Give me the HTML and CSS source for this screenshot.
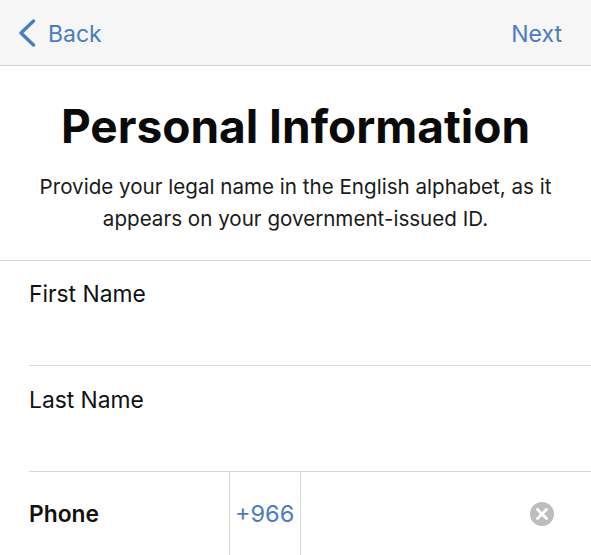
FILE: index.html
```html
<!DOCTYPE html>
<html lang="en">
<head>
    <meta charset="UTF-8">
    <meta name="viewport" content="width=device-width, initial-scale=1.0">
    <title>Personal Information</title>
    <link rel="stylesheet" href="styles.css">
</head>
<body>
    <header class="nav">
        <a class="nav-link back">
            <svg class="chevron" width="18" height="28" viewBox="0 0 18 28">
                <path d="M15.5 2 L3 14 L15.5 26" fill="none" stroke="#4a7dc0" stroke-width="3.4" stroke-linecap="round" stroke-linejoin="round"/>
            </svg>
            <span>Back</span>
        </a>
        <a class="nav-link">Next</a>
    </header>

    <section class="intro">
        <h1>Personal Information</h1>
        <p>Provide your legal name in the English alphabet, as it appears on your government-issued ID.</p>
    </section>

    <form class="fields">
        <div class="row">First Name</div>
        <div class="row row-tall">Last Name</div>
        <div class="row phone">
            <div class="phone-label">Phone</div>
            <div class="phone-code">+966</div>
            <div class="phone-input">
                <svg class="clear" width="24" height="24" viewBox="0 0 24 24">
                    <circle cx="12" cy="12" r="12" fill="#bdbdbd"/>
                    <path d="M7.5 7.5 L16.5 16.5 M16.5 7.5 L7.5 16.5" stroke="#fff" stroke-width="2.8" stroke-linecap="round"/>
                </svg>
            </div>
        </div>
    </form>
</body>
</html>
```

FILE: styles.css
```css
/* General Styles */
html, body {
    height: 100%;
}

body {
    margin: 0;
    overflow: hidden;
    background: #fff;
    color: #111;
    font-family: 'Inter', 'Liberation Sans', sans-serif;
}

/* Top bar */
.nav {
    display: flex;
    justify-content: space-between;
    align-items: center;
    height: 63px;
    padding: 2px 29px 0 18px;
    background: #f6f6f6;
    border-bottom: 1px solid #d4d4d4;
}

.nav-link {
    display: flex;
    align-items: center;
    gap: 12px;
    font-size: 23px;
    color: #4a7dc0;
}

.chevron {
    margin-top: -2px;
}

/* Heading */
.intro {
    height: 194px;
    padding: 0 20px;
    text-align: center;
    border-bottom: 1px solid #d8d8d8;
}

h1 {
    margin: 0;
    padding-top: 30px;
    font-size: 46px;
    line-height: 60px;
    font-weight: 700;
    color: #0a0a0a;
}

.intro p {
    margin: 15px 0 0;
    font-size: 20.6px;
    line-height: 32px;
    color: #1a1a1a;
}

/* Form rows */
.fields {
    padding-left: 29px;
}

.row {
    height: 105px;
    padding-top: 17px;
    box-sizing: border-box;
    border-bottom: 1px solid #d8d8d8;
    font-size: 22.8px;
    line-height: 32px;
}

.row-tall {
    height: 106px;
    padding-top: 18px;
}

.phone {
    display: flex;
    height: 84px;
    padding-top: 0;
    border-bottom: 0;
}

.phone-label {
    width: 200px;
    padding-top: 26px;
    font-weight: 600;
}

.phone-code {
    width: 72px;
    box-sizing: border-box;
    padding: 26px 0 0 5px;
    border-left: 1px solid #d8d8d8;
    border-right: 1px solid #d8d8d8;
    font-size: 23.5px;
    color: #4a7dc0;
}

.phone-input {
    flex: 1;
    display: flex;
    justify-content: flex-end;
    padding: 30px 37px 0 0;
}

.clear {
    display: block;
}
```
